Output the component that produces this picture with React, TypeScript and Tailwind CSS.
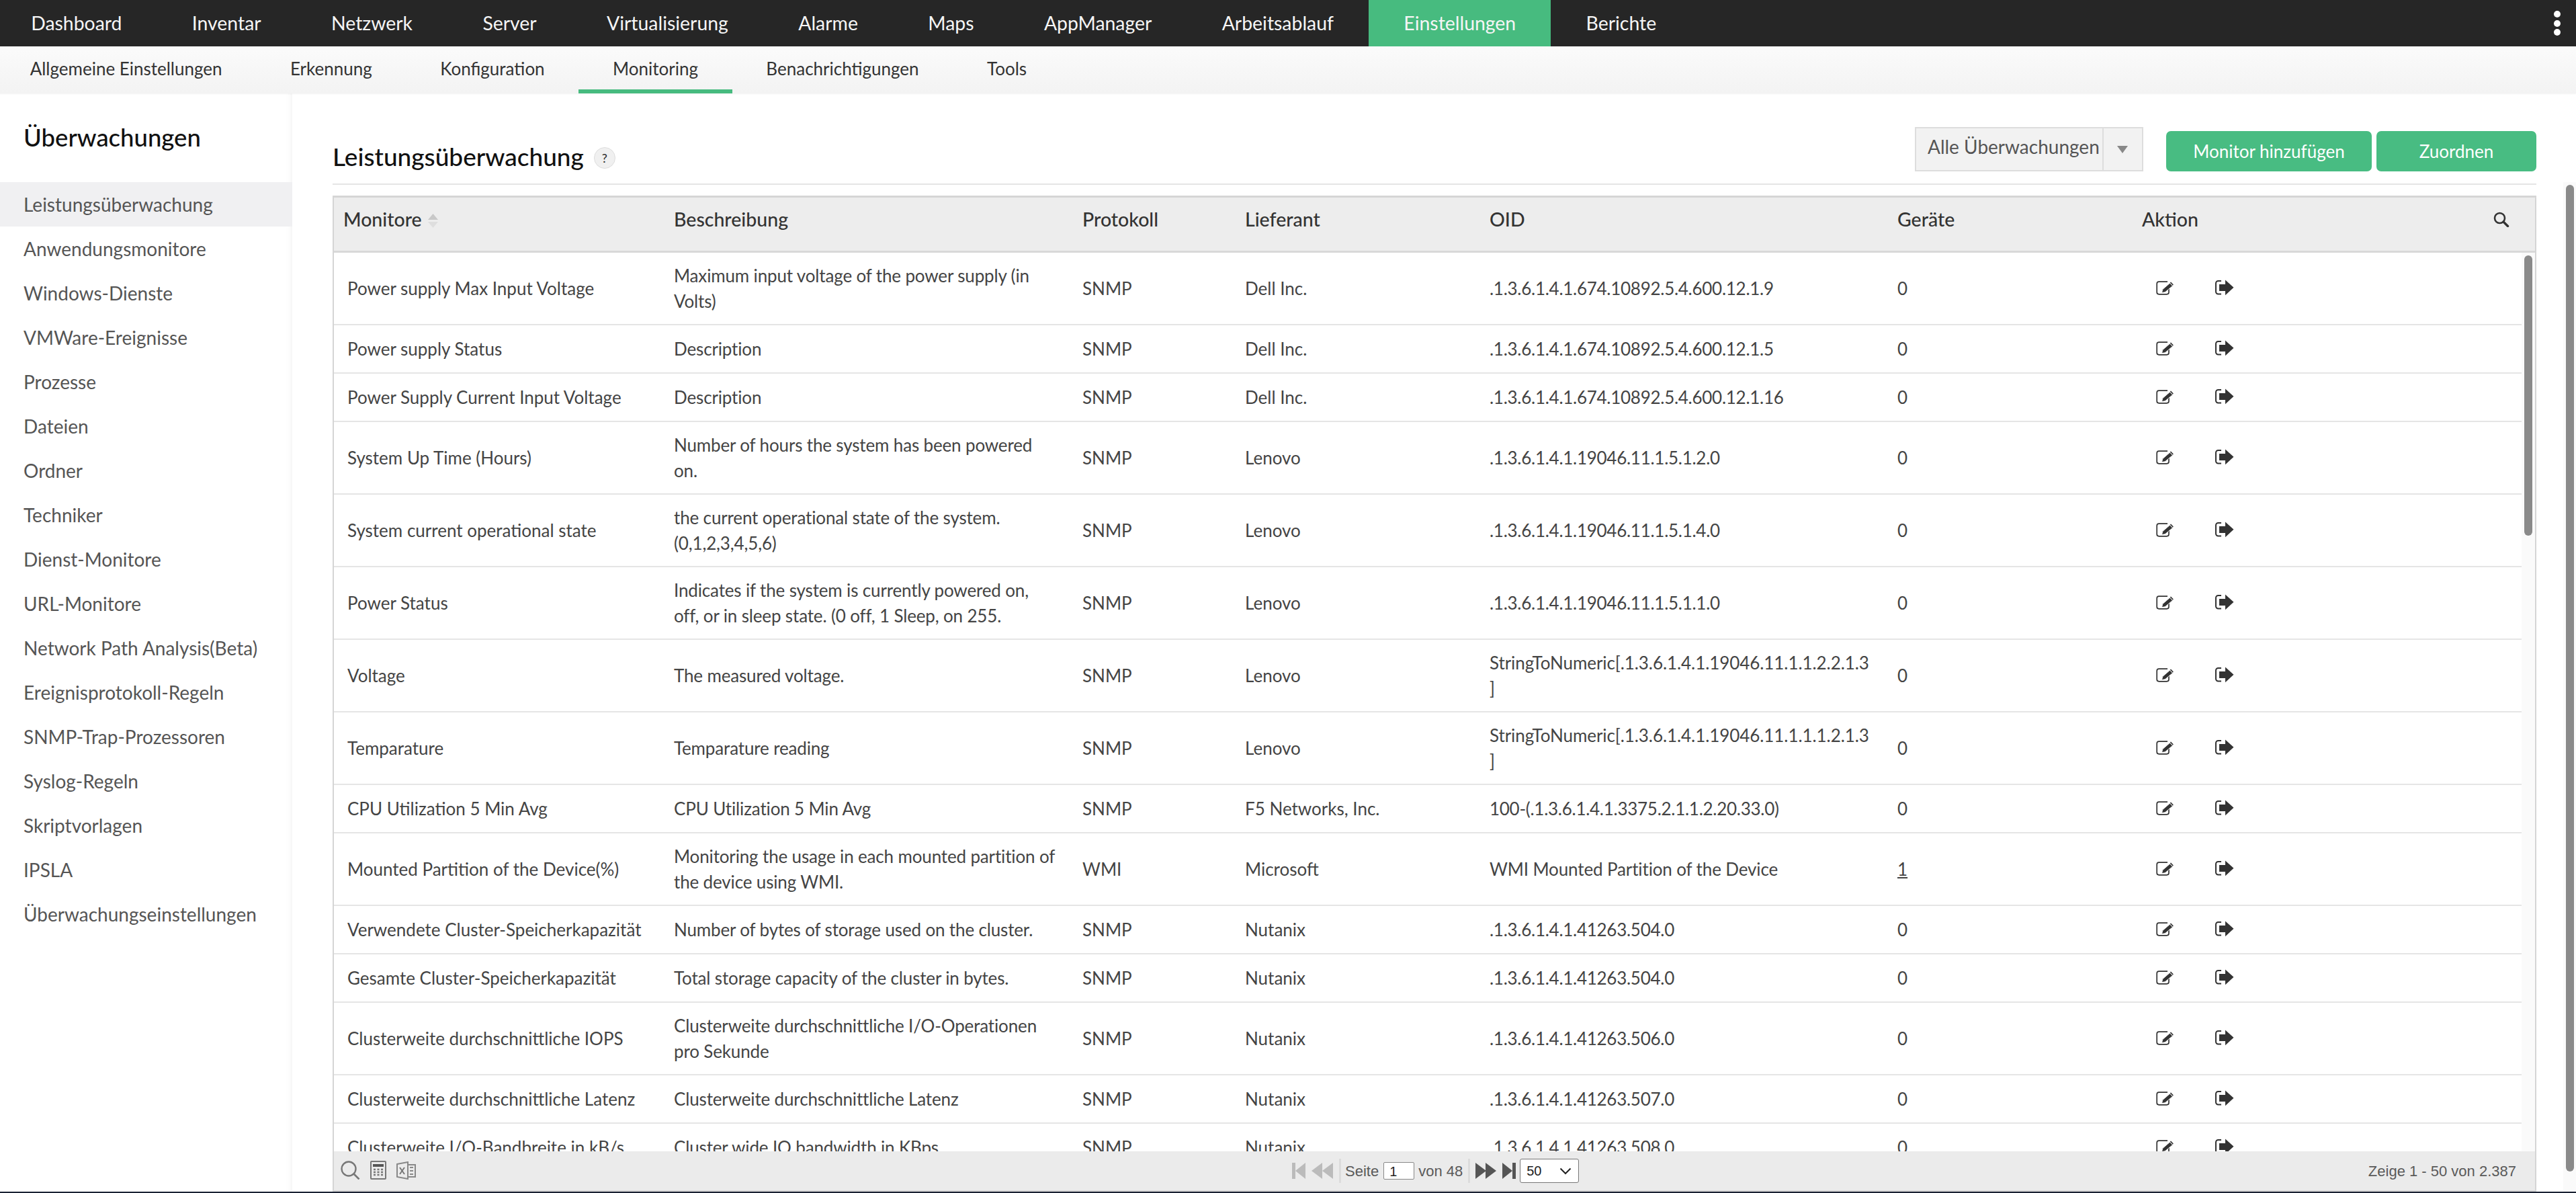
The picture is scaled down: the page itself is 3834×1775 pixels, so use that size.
const TOP = ["Dashboard","Inventar","Netzwerk","Server","Virtualisierung","Alarme","Maps","AppManager","Arbeitsablauf","Einstellungen","Berichte"];
const SUB = ["Allgemeine Einstellungen","Erkennung","Konfiguration","Monitoring","Benachrichtigungen","Tools"];
const SIDE = ["Leistungsüberwachung","Anwendungsmonitore","Windows-Dienste","VMWare-Ereignisse","Prozesse","Dateien","Ordner","Techniker","Dienst-Monitore","URL-Monitore","Network Path Analysis(Beta)","Ereignisprotokoll-Regeln","SNMP-Trap-Prozessoren","Syslog-Regeln","Skriptvorlagen","IPSLA","Überwachungseinstellungen"];
const ROWS = [
  ["Power supply Max Input Voltage","Maximum input voltage of the power supply (in Volts)","SNMP","Dell Inc.",".1.3.6.1.4.1.674.10892.5.4.600.12.1.9","0"],
  ["Power supply Status","Description","SNMP","Dell Inc.",".1.3.6.1.4.1.674.10892.5.4.600.12.1.5","0"],
  ["Power Supply Current Input Voltage","Description","SNMP","Dell Inc.",".1.3.6.1.4.1.674.10892.5.4.600.12.1.16","0"],
  ["System Up Time (Hours)","Number of hours the system has been powered on.","SNMP","Lenovo",".1.3.6.1.4.1.19046.11.1.5.1.2.0","0"],
  ["System current operational state","the current operational state of the system. (0,1,2,3,4,5,6)","SNMP","Lenovo",".1.3.6.1.4.1.19046.11.1.5.1.4.0","0"],
  ["Power Status","Indicates if the system is currently powered on, off, or in sleep state. (0 off, 1 Sleep, on 255.","SNMP","Lenovo",".1.3.6.1.4.1.19046.11.1.5.1.1.0","0"],
  ["Voltage","The measured voltage.","SNMP","Lenovo","StringToNumeric[.1.3.6.1.4.1.19046.11.1.1.2.2.1.3]","0"],
  ["Temparature","Temparature reading","SNMP","Lenovo","StringToNumeric[.1.3.6.1.4.1.19046.11.1.1.1.2.1.3]","0"],
  ["CPU Utilization 5 Min Avg","CPU Utilization 5 Min Avg","SNMP","F5 Networks, Inc.","100-(.1.3.6.1.4.1.3375.2.1.1.2.20.33.0)","0"],
  ["Mounted Partition of the Device(%)","Monitoring the usage in each mounted partition of the device using WMI.","WMI","Microsoft","WMI Mounted Partition of the Device","1"],
  ["Verwendete Cluster-Speicherkapazität","Number of bytes of storage used on the cluster.","SNMP","Nutanix",".1.3.6.1.4.1.41263.504.0","0"],
  ["Gesamte Cluster-Speicherkapazität","Total storage capacity of the cluster in bytes.","SNMP","Nutanix",".1.3.6.1.4.1.41263.504.0","0"],
  ["Clusterweite durchschnittliche IOPS","Clusterweite durchschnittliche I/O-Operationen pro Sekunde","SNMP","Nutanix",".1.3.6.1.4.1.41263.506.0","0"],
  ["Clusterweite durchschnittliche Latenz","Clusterweite durchschnittliche Latenz","SNMP","Nutanix",".1.3.6.1.4.1.41263.507.0","0"],
  ["Clusterweite I/O-Bandbreite in kB/s","Cluster wide IO bandwidth in KBps","SNMP","Nutanix",".1.3.6.1.4.1.41263.508.0","0"],
];

function EditIcon() {
  return (
    <svg width="27" height="21" viewBox="0 0 27 21" fill="none">
      <path d="M17 1.200H4.200a3 3 0 0 0-3 3V16.800a3 3 0 0 0 3 3H16a3 3 0 0 0 3-3V11.500" stroke="#333" strokeWidth="1.7" />
      <path d="M8.600 17.600l1.200-5L20.600 3.200l3.900 4.200L13.600 16.600z" fill="#333" stroke="#fff" strokeWidth="0.8" />
      <path d="M22 1.400l3.900 4.200-1.200 1.200-3.900-4.200z" fill="#333" />
    </svg>
  );
}
function ExitIcon() {
  return (
    <svg width="29" height="24" viewBox="0 0 29 24" fill="none">
      <path d="M10 2H5.500a3.500 3.500 0 0 0-3.500 3.500v12.500a3.500 3.500 0 0 0 3.500 3.500H10" stroke="#333" strokeWidth="2" />
      <path d="M7 7h9V0.600L28.500 11.800 16 23.200V17H7z" fill="#333" />
    </svg>
  );
}
function SearchGlyph() {
  return (
    <svg width="24" height="23" viewBox="0 0 24 23" fill="none">
      <circle cx="9.500" cy="9.500" r="7.500" stroke="#333" strokeWidth="2.6" />
      <path d="M15 15l6.500 6.500" stroke="#333" strokeWidth="3.400" strokeLinecap="round" />
    </svg>
  );
}
function Row({ r }: { r: string[] }) {
  const isString = r[4].startsWith("String");
  const oidClass = isString ? "tracking-[-0.07px]" : r[4].startsWith("WMI") ? "tracking-[-0.13px]" : "tracking-[-0.27px]";
  return (
    <div className="grid grid-cols-[506px_608px_242px_364px_607px_364px_1fr] items-center min-h-[72px] py-[15px] border-b-2 border-[#e5e5e5]">
      <div className="pl-[20px] pr-[8px]">{r[0]}</div>
      <div className="pr-[38px] tracking-[-0.15px]">{r[1]}</div>
      <div>{r[2]}</div>
      <div>{r[3]}</div>
      <div className={`pr-[24px] ${oidClass}`}>
        {isString ? r[4].slice(0, -1) : r[4]}
        {isString && <br />}
        {isString && "]"}
      </div>
      <div className={r[5] === "1" ? "underline" : ""}>{r[5]}</div>
      <div className="flex items-center pl-[21px] gap-[60px] -mt-[2px]">
        <EditIcon />
        <ExitIcon />
      </div>
    </div>
  );
}
function Pager() {
  return (
    <div className="flex items-center h-full font-['Liberation_Sans',Arial,sans-serif] text-[22px] text-[#5a5a5a]">
      <svg width="20" height="24" viewBox="0 0 20 24" fill="#bbb"><rect x="0" y="0" width="5" height="24" /><path d="M20 0v24L5 12z" /></svg>
      <svg className="ml-[9px]" width="32" height="24" viewBox="0 0 32 24" fill="#bbb"><path d="M16 0v24L0 12z" /><path d="M32 0v24L16 12z" /></svg>
      <div className="ml-[9px] w-[3px] h-[36px] bg-[#dcdcdc]" />
      <span className="ml-[6px]">Seite</span>
      <div className="ml-[7px] w-[46px] h-[26px] bg-white border border-[#888] rounded-[2px] pl-[8px] text-[20px] leading-[26px] text-[#222]">1</div>
      <span className="ml-[6px]">von 48</span>
      <div className="ml-[8px] w-[3px] h-[36px] bg-[#dcdcdc]" />
      <svg className="ml-[8px]" width="31" height="24" viewBox="0 0 31 24" fill="#555"><path d="M0 0l16 12L0 24z" /><path d="M15 0l16 12-16 12z" /></svg>
      <svg className="ml-[9px]" width="20" height="24" viewBox="0 0 20 24" fill="#555"><path d="M0 0l15 12L0 24z" /><rect x="15" y="0" width="5" height="24" /></svg>
      <div className="ml-[6px] w-[88px] h-[36px] bg-white border border-[#777] rounded-[3px] flex items-center justify-between pl-[9px] pr-[10px] text-[20px] text-[#222]">
        <span>50</span>
        <svg width="18" height="11" viewBox="0 0 18 11" fill="none"><path d="M1.500 1.500L9 9l7.500-7.500" stroke="#222" strokeWidth="2" /></svg>
      </div>
    </div>
  );
}

export default function App() {
  return (
    <div className="h-[1775px] w-[3834px] overflow-hidden flex flex-col bg-white font-['Lato',sans-serif] text-[26px] text-[#444]">
      <div className="h-[69px] shrink-0 bg-[#262626] flex items-stretch justify-between pr-[23px]">
        <div className="flex items-stretch -ml-[6px] text-[#f5f5f5] text-[28.4px]">
          {TOP.map((t) => (
            <div key={t} className={`flex items-center px-[52.2px] ${t === "Einstellungen" ? "bg-[#47bb7f]" : ""}`}>{t}</div>
          ))}
        </div>
        <div className="flex flex-col justify-center gap-[3.5px]">
          <div className="w-[10px] h-[10px] rounded-full bg-white" />
          <div className="w-[10px] h-[10px] rounded-full bg-white" />
          <div className="w-[10px] h-[10px] rounded-full bg-white" />
        </div>
      </div>
      <div className="h-[70px] shrink-0 bg-gradient-to-b from-[#fbfbfb] to-[#f3f3f3] flex items-stretch -ml-[6px] text-[#333] shadow-[0_1px_2px_rgba(0,0,0,0.05)] z-10">
        {SUB.map((t) => (
          <div key={t} className={`flex items-center px-[50.7px] ${t === "Monitoring" ? "border-b-[6px] border-[#47bb7f] pt-[3px]" : "pb-[3px]"}`}>{t}</div>
        ))}
      </div>
      <div className="flex-1 min-h-0 flex">
        <div className="w-[435px] shrink-0 shadow-[inset_-10px_0_10px_-8px_rgba(0,0,0,0.05)]">
          <div className="h-[132px] pl-[35px] pt-[43px] text-[36.5px] leading-[44px] text-[#111] font-medium">Überwachungen</div>
          {SIDE.map((s) => (
            <div key={s} className={`h-[66px] pl-[35px] flex items-center text-[28px] text-[#555] ${s === "Leistungsüberwachung" ? "bg-[#f0f0f2] text-[#333]" : ""}`}>{s}</div>
          ))}
        </div>
        <div className="flex-1 min-w-0 pl-[60px] pr-[40px] flex flex-col">
          <div className="h-[136px] shrink-0 border-b-2 border-[#e5e5e5] flex justify-between items-start">
            <div className="mt-[72px] flex items-center">
              <span className="text-[37px] leading-[44px] text-[#111] font-medium">Leistungsüberwachung</span>
              <span className="ml-[15px] mt-[4px] w-[32px] h-[32px] rounded-full bg-[#f0f0f0] border border-[#ddd] flex items-center justify-center text-[18px] font-medium text-[#333]">?</span>
            </div>
            <div className="flex items-start">
              <div className="mt-[50px] w-[340px] h-[66px] bg-[#f2f2f2] border-2 border-[#ddd] flex items-stretch text-[28px] text-[#555]">
                <div className="w-[277px] pl-[17px] pb-[8px] flex items-center whitespace-nowrap">Alle Überwachungen</div>
                <div className="flex-1 border-l-2 border-[#ddd] flex items-center justify-center pr-[2px]">
                  <svg width="16" height="11" viewBox="0 0 16 11" fill="#888"><path d="M0 0h16L8 11z" /></svg>
                </div>
              </div>
              <div className="mt-[56px] ml-[34px] w-[306px] h-[60px] rounded-[7px] bg-[#48bc82] text-white flex items-center justify-center">Monitor hinzufügen</div>
              <div className="mt-[56px] ml-[7px] w-[238px] h-[60px] rounded-[7px] bg-[#48bc82] text-white flex items-center justify-center">Zuordnen</div>
            </div>
          </div>
          <div className="mt-[16px] flex-1 min-h-0 flex flex-col border-x-2 border-[#d5d5d5]">
            <div className="h-[85px] shrink-0 bg-[#ededed] border-t-[3px] border-b-[3px] border-t-[#d5d5d5] border-b-[#d8d8d8] grid grid-cols-[506px_608px_242px_364px_607px_364px_1fr] items-start pt-[13px] leading-[38px] text-[28.5px] text-[#333] font-medium">
              <div className="pl-[14px] h-[38px] flex items-center gap-[9px]">
                Monitore
                <svg className="mt-[4px]" width="15" height="21" viewBox="0 0 15 21"><path d="M7.500 0L15 9H0z" fill="#c8c8c8" /><path d="M0 12h15l-7.500 9z" fill="#dedede" /></svg>
              </div>
              <div>Beschreibung</div>
              <div>Protokoll</div>
              <div>Lieferant</div>
              <div>OID</div>
              <div>Geräte</div>
              <div className="h-[38px] flex items-center justify-between pr-[38px]">
                Aktion
                <SearchGlyph />
              </div>
            </div>
            <div className="flex-1 min-h-0 flex overflow-hidden">
              <div className="w-[3256px] shrink-0 leading-[38px]">
                {ROWS.map((r) => <Row key={r[0]} r={r} />)}
              </div>
              <div className="flex-1 bg-[#fafafa] pt-[4px] pl-[4px]">
                <div className="w-[12px] h-[417px] rounded-full bg-[#8a8a8a]" />
              </div>
            </div>
            <div className="h-[60px] shrink-0 bg-[#ebebeb] border-b-2 border-[#d5d5d5] relative z-10 flex items-center justify-between pl-[10px] pr-[28px]">
              <div className="flex items-center gap-[15px] -mt-[2px]">
                <svg width="29" height="28" viewBox="0 0 29 28" fill="none"><circle cx="12" cy="12" r="10.500" stroke="#777" strokeWidth="2.4" /><path d="M19.500 19.500l8 8" stroke="#777" strokeWidth="2.6" /></svg>
                <svg width="24" height="28" viewBox="0 0 24 28" fill="none"><rect x="1" y="1" width="22" height="26" rx="1" stroke="#777" strokeWidth="2" /><rect x="4" y="5" width="16" height="4" fill="#555" /><path d="M5 13h3M10.500 13h3M16 13h3M5 17h3M10.500 17h3M16 17h3M5 21h3M10.500 21h3M16 21h3" stroke="#777" strokeWidth="2.4" /></svg>
                <svg width="29" height="27" viewBox="0 0 29 27" fill="none"><path d="M1 4l16-3v25L1 23z" stroke="#888" strokeWidth="2" /><path d="M17 5h11v18H17" stroke="#888" strokeWidth="2" /><path d="M5 9l7 10M12 9l-7 10" stroke="#777" strokeWidth="2" /><path d="M20 9h5M20 14h5M20 19h5" stroke="#888" strokeWidth="2" /></svg>
              </div>
              <div className="absolute left-[1426px] top-0 h-full"><Pager /></div>
              <div className="font-['Liberation_Sans',Arial,sans-serif] text-[22px] text-[#5a5a5a]">Zeige 1 - 50 von 2.387</div>
            </div>
          </div>
        </div>
        <div className="w-[19px] shrink-0 mt-[132px] bg-[#fafafa] pt-[4px] pl-[4px]">
          <div className="w-[12px] h-[1468px] rounded-full bg-[#8a8a8a]" />
        </div>
      </div>
      <div className="h-[2px] shrink-0 bg-[#1a2233]" />
    </div>
  );
}
